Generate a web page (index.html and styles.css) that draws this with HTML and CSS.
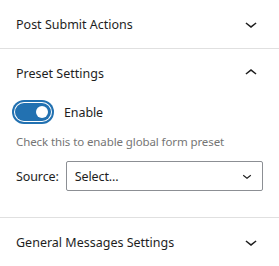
FILE: index.html
```html
<!DOCTYPE html>
<html lang="en">
  <head>
    <meta charset="UTF-8" />
    <title>Form settings</title>
    <link rel="stylesheet" href="styles.css">
  </head>
  <body>
    <div class="panel">
      <button class="panel-toggle">
        <span>Post Submit Actions</span>
        <svg class="chevron" viewBox="0 0 24 24" width="24" height="24"><path d="M17.5 11.6L12 16l-5.5-4.4.9-1.2L12 14l4.6-3.6 1 1.2z"/></svg>
      </button>
    </div>

    <div class="panel is-open">
      <button class="panel-toggle">
        <span>Preset Settings</span>
        <svg class="chevron" viewBox="0 0 24 24" width="24" height="24"><path d="M6.5 12.4L12 8l5.5 4.4-.9 1.2L12 10l-4.6 3.6-1-1.2z"/></svg>
      </button>
      <div class="panel-body">
        <label class="toggle-row">
          <span class="toggle"><span class="thumb"></span></span>
          <span>Enable</span>
        </label>
        <p class="help">Check this to enable global form preset</p>
        <div class="field">
          <span class="field-label">Source:</span>
          <div class="select">
            <span>Select...</span>
            <svg viewBox="0 0 24 24" width="18" height="18"><path d="M17.5 11.6L12 16l-5.5-4.4.9-1.2L12 14l4.6-3.6 1 1.2z"/></svg>
          </div>
        </div>
      </div>
    </div>

    <div class="panel">
      <button class="panel-toggle">
        <span>General Messages Settings</span>
        <svg class="chevron" viewBox="0 0 24 24" width="24" height="24"><path d="M17.5 11.6L12 16l-5.5-4.4.9-1.2L12 14l4.6-3.6 1 1.2z"/></svg>
      </button>
    </div>
  </body>
</html>
```

FILE: styles.css
```css
body {
  font-family: "Noto Sans", "Open Sans", sans-serif;
  font-size: 12.5px;
  letter-spacing: -0.1px;
  color: #1e1e1e;
  margin: 0;
  background: #fff;
}
.panel {
  border-bottom: 1px solid #e0e0e0;
}
.panel-toggle {
  display: flex;
  align-items: center;
  justify-content: space-between;
  width: 100%;
  height: 48px;
  padding: 0 16px;
  border: 0;
  background: none;
  font: inherit;
  color: #1e1e1e;
  text-align: left;
}
.chevron {
  fill: #1e1e1e;
}
.panel-body {
  padding: 3px 16px 26px;
}
.toggle-row {
  display: flex;
  align-items: center;
  gap: 10px;
}
.toggle {
  display: flex;
  align-items: center;
  justify-content: flex-end;
  box-sizing: border-box;
  width: 36px;
  height: 18px;
  margin: 3px;
  padding: 0 3px;
  border-radius: 9px;
  background: #2271b1;
  box-shadow: 0 0 0 1px #fff, 0 0 0 3px #2271b1;
  margin-left: -1px;
}
.thumb {
  width: 12px;
  height: 12px;
  border-radius: 50%;
  background: #fff;
}
.help {
  margin: 10px 0 12px;
  font-size: 11.5px;
  color: #757575;
}
.field {
  display: flex;
  align-items: center;
  gap: 7px;
}
.field-label {
  color: #1e1e1e;
}
.select {
  flex: 1;
  display: flex;
  align-items: center;
  justify-content: space-between;
  height: 28px;
  padding: 0 6px 0 8px;
  border: 1px solid #8c8f94;
  border-radius: 2px;
}
.select svg {
  fill: #1e1e1e;
}
```
